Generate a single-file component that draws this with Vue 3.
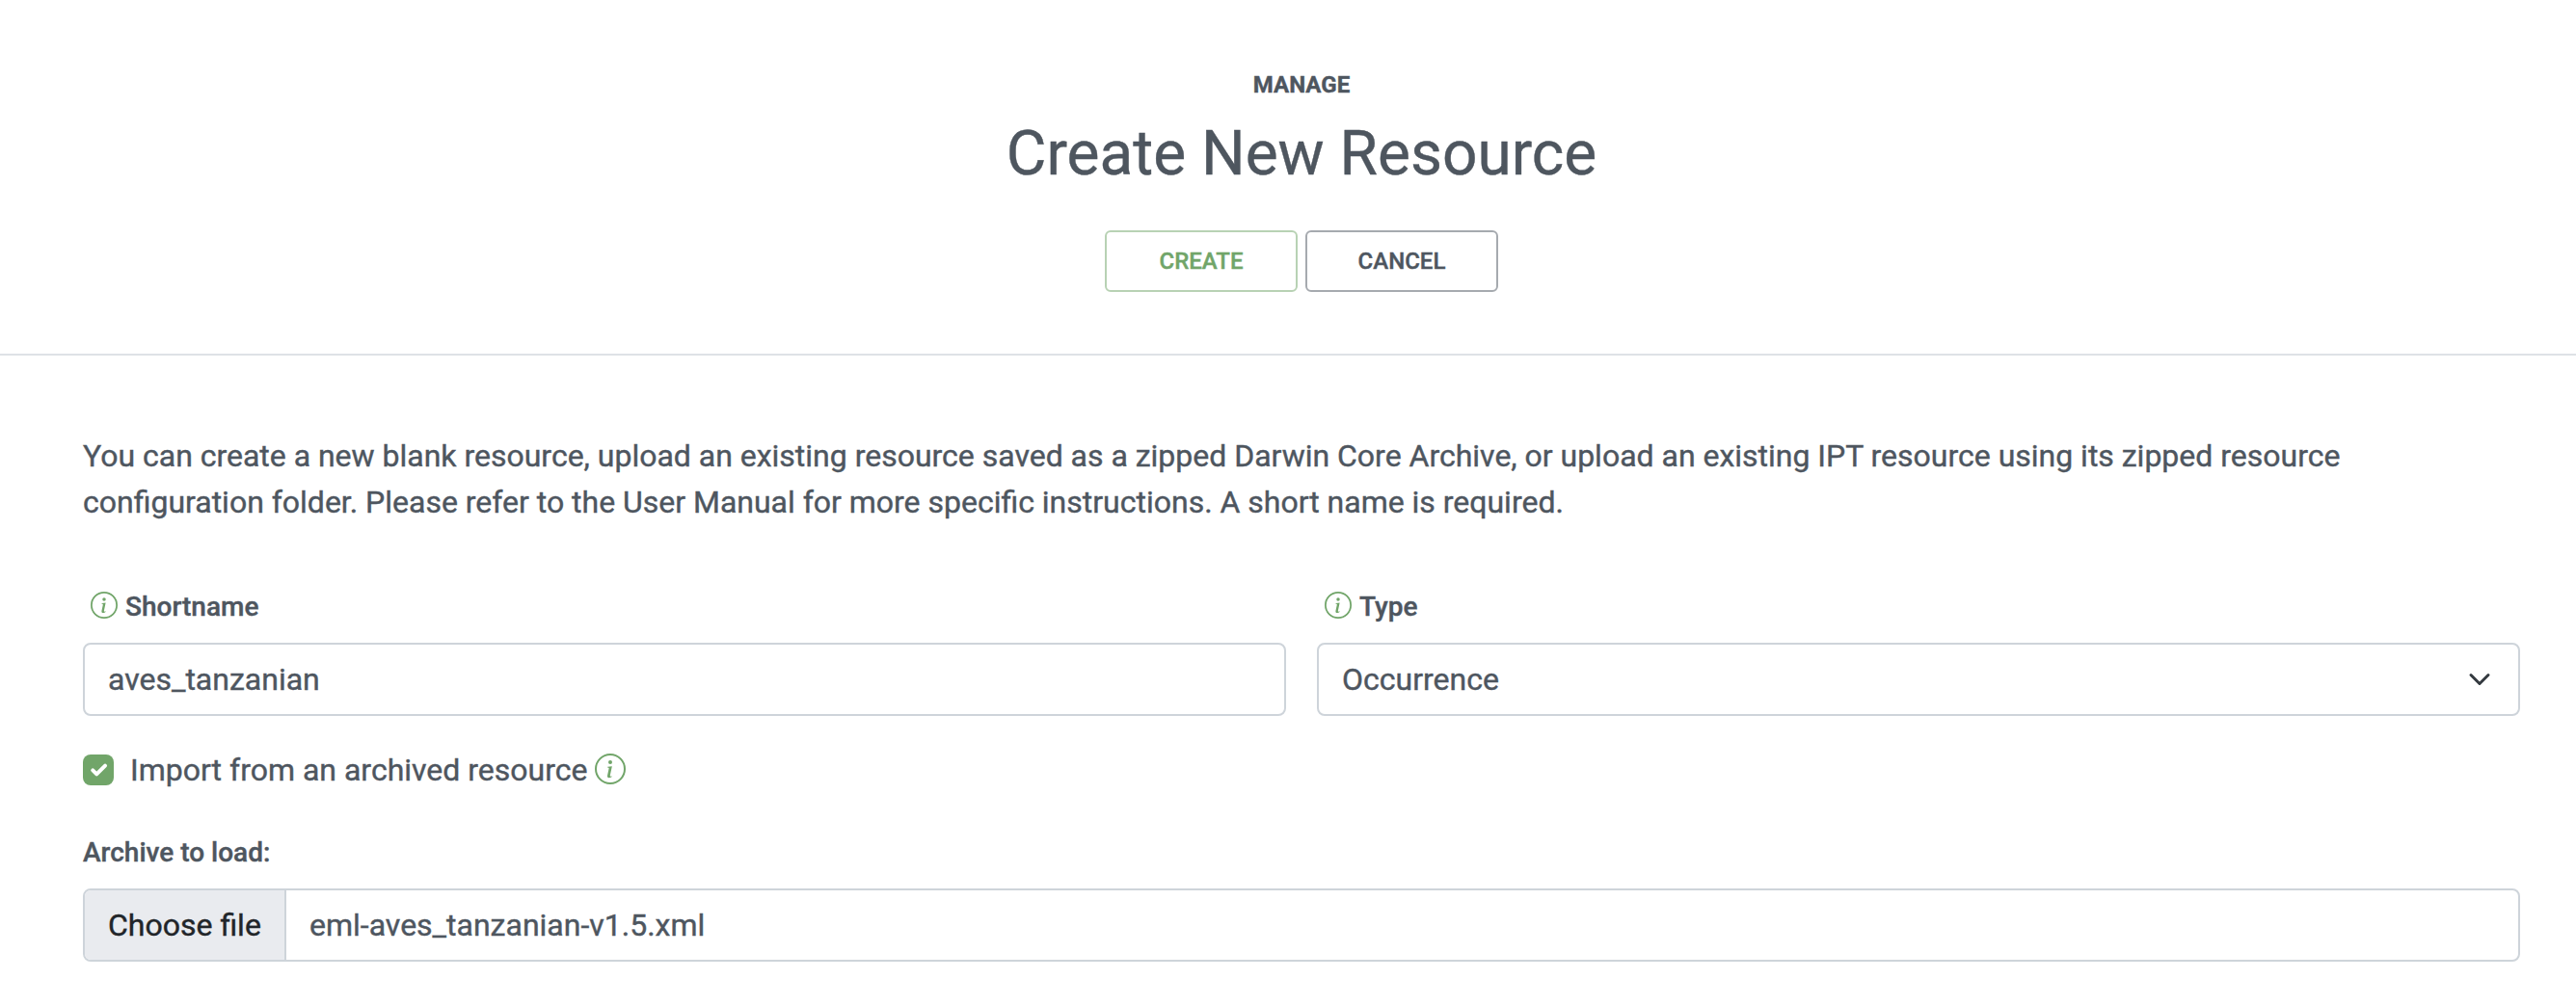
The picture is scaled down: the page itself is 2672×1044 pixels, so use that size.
<script setup>
import { ref } from 'vue'

const shortname = ref('aves_tanzanian')
const type = ref('Occurrence')
const fileName = ref('eml-aves_tanzanian-v1.5.xml')

const infoPaths = [
  'M8 15A7 7 0 1 1 8 1a7 7 0 0 1 0 14zm0 1A8 8 0 1 0 8 0a8 8 0 0 0 0 16z',
  'm8.930 6.588-2.290.287-.082.380.450.083c.294.070.352.176.288.469l-.738 3.468c-.194.897.105 1.319.808 1.319.545 0 1.178-.252 1.465-.598l.088-.416c-.200.176-.492.246-.686.246-.275 0-.375-.193-.304-.533L8.930 6.588zM9 4.500a1 1 0 1 1-2 0 1 1 0 0 1 2 0z',
]
</script>

<template>
  <div class="page">
    <header class="head">
      <div class="section">MANAGE</div>
      <h1>Create New Resource</h1>
      <div class="actions">
        <button class="btn create">Create</button>
        <button class="btn cancel">Cancel</button>
      </div>
    </header>

    <main>
      <p class="intro">
        You can create a new blank resource, upload an existing resource saved as a zipped Darwin Core Archive, or upload an existing IPT resource using its zipped resource<br />
        configuration folder. Please refer to the User Manual for more specific instructions. A short name is required.
      </p>

      <div class="row">
        <div class="field">
          <div class="label">
            <svg class="info" viewBox="0 0 16 16"><path v-for="d in infoPaths" :key="d" :d="d" /></svg>
            <span>Shortname</span>
          </div>
          <div class="control">{{ shortname }}</div>
        </div>
        <div class="field">
          <div class="label">
            <svg class="info" viewBox="0 0 16 16"><path v-for="d in infoPaths" :key="d" :d="d" /></svg>
            <span>Type</span>
          </div>
          <div class="control select">
            <span>{{ type }}</span>
            <svg class="chevron" viewBox="0 0 16 16"><path d="m2 5 6 6 6-6" /></svg>
          </div>
        </div>
      </div>

      <div class="check">
        <span class="box">
          <svg viewBox="0 0 20 20"><path d="M6.4 10.2 8.9 12.7 14.4 7.3" /></svg>
        </span>
        <span class="check-text">Import from an archived resource</span>
        <svg class="info large" viewBox="0 0 16 16"><path v-for="d in infoPaths" :key="d" :d="d" /></svg>
      </div>

      <div class="label archive">Archive to load:</div>
      <div class="file">
        <span class="choose">Choose file</span>
        <span class="name">{{ fileName }}</span>
      </div>
    </main>
  </div>
</template>

<style>
body {
  background: #fff;
  overflow: hidden;
}
</style>

<style scoped>
.page {
  width: 2700px;
  height: 1044px;
  overflow: hidden;
  box-sizing: border-box;
  font-family: Roboto, "Liberation Sans", sans-serif;
  font-size: 32px;
  line-height: 48px;
  color: #4e565f;
  -webkit-text-stroke: 0.4px;
}
.page * {
  box-sizing: border-box;
}
.head {
  height: 369px;
  padding-top: 70px;
  border-bottom: 2px solid #dee2e6;
  text-align: center;
}
.section {
  font-size: 24px;
  line-height: 36px;
  font-weight: 700;
}
h1 {
  margin: 16px 0 0;
  font-size: 64px;
  line-height: 76px;
  font-weight: 400;
}
.actions {
  display: flex;
  justify-content: center;
  gap: 8px;
  margin-top: 41px;
}
.btn {
  width: 200px;
  height: 64px;
  padding: 0;
  border: 2px solid;
  border-radius: 6px;
  background: #fff;
  font-family: inherit;
  font-size: 24px;
  font-weight: 500;
  text-transform: uppercase;
}
.create {
  color: #71a569;
  border-color: #b8d2b4;
}
.cancel {
  color: #4e565f;
  border-color: #a6aaaf;
}
main {
  padding: 80px 86px 0;
}
.intro {
  margin: 0;
  white-space: nowrap;
  word-spacing: -0.06px;
}
.row {
  display: flex;
  gap: 32px;
  margin-top: 64px;
}
.field {
  flex: 1;
}
.label {
  display: flex;
  align-items: center;
  height: 42px;
  font-size: 28px;
  line-height: 42px;
  font-weight: 500;
}
.field .label {
  padding-left: 8px;
  margin-bottom: 15px;
  margin-top: -1px;
  height: 44px;
}
.info {
  width: 28px;
  height: 28px;
  margin-right: 8px;
  fill: #71a569;
}
.label .info {
  position: relative;
  top: -2px;
}
.control {
  display: flex;
  align-items: center;
  height: 76px;
  padding: 0 24px;
  border: 2px solid #ced4da;
  border-radius: 8px;
}
.select {
  justify-content: space-between;
  padding-right: 28px;
}
.chevron {
  width: 24px;
  height: 24px;
  fill: none;
  stroke: #343a40;
  stroke-width: 2;
  stroke-linecap: round;
  stroke-linejoin: round;
}
.check {
  display: flex;
  align-items: center;
  height: 48px;
  margin-top: 32px;
}
.box {
  width: 32px;
  height: 32px;
  border-radius: 8px;
  background: #71a569;
}
.box svg {
  display: block;
  width: 32px;
  height: 32px;
  fill: none;
  stroke: #fff;
  stroke-width: 2.5;
  stroke-linecap: round;
  stroke-linejoin: round;
}
.check-text {
  margin: 0 8px 0 17px;
}
.large {
  width: 32px;
  height: 32px;
  margin-top: -2px;
}
.archive {
  margin-top: 41px;
  margin-bottom: 16px;
}
.file {
  display: flex;
  height: 76px;
  border: 2px solid #ced4da;
  border-radius: 8px;
  line-height: 72px;
  overflow: hidden;
}
.choose {
  width: 209px;
  padding-left: 24px;
  border-right: 2px solid #ced4da;
  background: #e9ebef;
  color: #212529;
}
.name {
  padding-left: 24px;
}
</style>
